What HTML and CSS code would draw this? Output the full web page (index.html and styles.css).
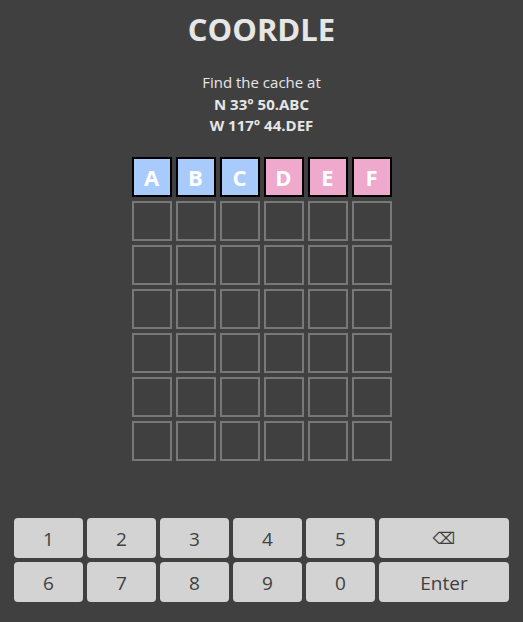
FILE: index.html
```html
<!DOCTYPE html>
<html>
<head>
<meta charset="utf-8">
<link rel="stylesheet" href="styles.css">
</head>
<body>
<div class="app">
  <h1 class="title">COORDLE</h1>
  <div class="intro">
    <div>Find the cache at</div>
    <div class="coord">N 33° 50.ABC</div>
    <div class="coord">W 117° 44.DEF</div>
  </div>
  <div class="board">
    <div class="row">
      <div class="tile blue">A</div><div class="tile blue">B</div><div class="tile blue">C</div>
      <div class="tile pink">D</div><div class="tile pink">E</div><div class="tile pink">F</div>
    </div>
    <div class="row"><div class="tile"></div><div class="tile"></div><div class="tile"></div><div class="tile"></div><div class="tile"></div><div class="tile"></div></div>
    <div class="row"><div class="tile"></div><div class="tile"></div><div class="tile"></div><div class="tile"></div><div class="tile"></div><div class="tile"></div></div>
    <div class="row"><div class="tile"></div><div class="tile"></div><div class="tile"></div><div class="tile"></div><div class="tile"></div><div class="tile"></div></div>
    <div class="row"><div class="tile"></div><div class="tile"></div><div class="tile"></div><div class="tile"></div><div class="tile"></div><div class="tile"></div></div>
    <div class="row"><div class="tile"></div><div class="tile"></div><div class="tile"></div><div class="tile"></div><div class="tile"></div><div class="tile"></div></div>
    <div class="row"><div class="tile"></div><div class="tile"></div><div class="tile"></div><div class="tile"></div><div class="tile"></div><div class="tile"></div></div>
  </div>
  <div class="keyboard">
    <button class="key">1</button>
    <button class="key">2</button>
    <button class="key">3</button>
    <button class="key">4</button>
    <button class="key">5</button>
    <button class="key back">&#x232B;</button>
    <button class="key">6</button>
    <button class="key">7</button>
    <button class="key">8</button>
    <button class="key">9</button>
    <button class="key">0</button>
    <button class="key">Enter</button>
  </div>
</div>
</body>
</html>
```
FILE: styles.css
```css
html, body {
  margin: 0;
  padding: 0;
  background: #404040;
}
body {
  font-family: "Open Sans", "DejaVu Sans", sans-serif;
  color: #e6e6e6;
}
.app {
  width: 523px;
  height: 622px;
  display: flex;
  flex-direction: column;
  align-items: center;
}
.title {
  margin: 8px 0 0;
  font-size: 31px;
  font-weight: 700;
  line-height: 43px;
  color: #e6e6e6;
}
.intro {
  margin-top: 21px;
  font-size: 15px;
  line-height: 21.5px;
  text-align: center;
}
.coord {
  font-weight: 700;
}
.board {
  margin-top: 20px;
  display: flex;
  flex-direction: column;
  gap: 4px;
}
.row {
  display: flex;
  gap: 4px;
}
.tile {
  box-sizing: border-box;
  width: 40px;
  height: 40px;
  border: 2px solid #787878;
  display: flex;
  align-items: center;
  justify-content: center;
  font-size: 22px;
  font-weight: 700;
  color: #ffffff;
  padding-top: 1px;
}
.tile.blue {
  background: #a8cbfc;
  border-color: #000;
}
.tile.pink {
  background: #efa9cc;
  border-color: #000;
}
.keyboard {
  margin-top: 57px;
  width: 495px;
  display: grid;
  grid-template-columns: 69px 69px 69px 69px 69px 130px;
  grid-auto-rows: 40px;
  gap: 4px;
}
.key {
  border: none;
  border-radius: 4px;
  background: #d3d3d3;
  color: #404040;
  font-family: "Open Sans", "DejaVu Sans", sans-serif;
  font-size: 19px;
  padding: 3px 0 0;
  display: flex;
  align-items: center;
  justify-content: center;
}
.key.back {
  font-family: "DejaVu Sans", sans-serif;
  font-size: 16px;
  padding-top: 1px;
}
```
